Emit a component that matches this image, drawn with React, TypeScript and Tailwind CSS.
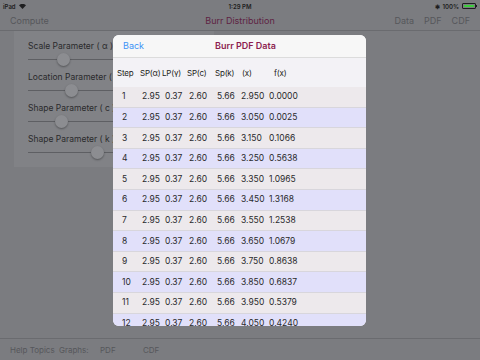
import React from "react";

const rows = [
  ["1", "2.950", "0.0000"],
  ["2", "3.050", "0.0025"],
  ["3", "3.150", "0.1066"],
  ["4", "3.250", "0.5638"],
  ["5", "3.350", "1.0965"],
  ["6", "3.450", "1.3168"],
  ["7", "3.550", "1.2538"],
  ["8", "3.650", "1.0679"],
  ["9", "3.750", "0.8638"],
  ["10", "3.850", "0.6837"],
  ["11", "3.950", "0.5379"],
  ["12", "4.050", "0.4240"],
];

const sliders = [
  { label: "Scale Parameter ( α )", thumb: 62 },
  { label: "Location Parameter ( γ )", thumb: 70 },
  { label: "Shape Parameter ( c )", thumb: 60 },
  { label: "Shape Parameter ( k )", thumb: 96 },
];

function Slider({ label, thumb }: { label: string; thumb: number }) {
  return (
    <div className="flex flex-col h-[31px]">
      <span className="w-[85px] overflow-hidden whitespace-nowrap text-[8.5px] text-[#2a2a2c] pt-[4px] leading-[12px]">
        {label}
      </span>
      <div className="relative h-[15px]">
        <div className="absolute left-0 right-0 top-[7px] h-px bg-[#5e5f63]" />
        <div
          className="absolute top-[1px] w-[13px] h-[13px] rounded-full bg-[#8c8d91] shadow-[0_1px_2px_rgba(0,0,0,0.35)]"
          style={{ left: thumb - 27 - 6 }}
        />
      </div>
    </div>
  );
}

export default function App() {
  return (
    <div
      className="relative w-[480px] h-[360px] overflow-hidden bg-[#7b7c80] flex flex-col"
      style={{ fontFamily: "Inter, 'Liberation Sans', sans-serif" }}
    >
      {/* status bar */}
      <div className="h-[12px] flex items-center justify-between px-[3px] text-[6px] font-semibold text-[#1e1e20]">
        <div className="flex items-center gap-[3px]">
          <span>iPad</span>
          <svg width="7" height="5" viewBox="0 0 10 7">
            <path d="M5 7 L0 1.8 A7.5 7.5 0 0 1 10 1.8 Z" fill="#1e1e20" />
          </svg>
        </div>
        <span className="absolute left-1/2 -translate-x-1/2">1:29 PM</span>
        <div className="flex items-center gap-[3px]">
          <span className="text-[6px]">✱</span>
          <span>100%</span>
          <div className="flex items-center">
            <div className="w-[14px] h-[6px] rounded-[1px] border border-[#1e1e20] p-px">
              <div className="w-full h-full bg-[#3dcc3d]" />
            </div>
            <div className="w-px h-[2px] bg-[#1e1e20]" />
          </div>
        </div>
      </div>

      {/* nav bar */}
      <div className="relative h-[19px] border-b border-[#6a6b6f] flex items-center px-[10px] text-[9px]">
        <span className="text-[#56575b]">Compute</span>
        <span className="absolute left-1/2 -translate-x-1/2 text-[#5e2343]">Burr Distribution</span>
        <div className="ml-auto flex gap-[10px] text-[#56575b]">
          <span>Data</span>
          <span>PDF</span>
          <span>CDF</span>
        </div>
      </div>

      {/* content */}
      <div className="flex-1">
        <div className="ml-[14px] w-[200px] h-[136px] bg-[#818286] pl-[14px] pr-[10px] pt-[5px]">
          {sliders.map((s) => (
            <Slider key={s.label} label={s.label} thumb={s.thumb} />
          ))}
        </div>
      </div>

      {/* bottom toolbar */}
      <div className="h-[22px] border-t border-[#6a6b6f] flex items-center px-[10px] text-[8px] text-[#56575b]">
        <span className="w-[49px]">Help Topics</span>
        <span className="w-[41px]">Graphs:</span>
        <span className="w-[43px]">PDF</span>
        <span>CDF</span>
      </div>

      {/* modal */}
      <div className="absolute left-[113px] top-[35px] w-[253px] h-[291px] rounded-[6px] overflow-hidden bg-white flex flex-col">
        <div className="relative h-[23px] shrink-0 bg-[#f7f7f7] border-b border-[#dcdcdc] flex items-center px-[10px]">
          <span className="text-[9px] text-[#3d94f6]">Back</span>
          <span className="absolute left-[calc(50%+6px)] -translate-x-1/2 text-[9px] font-semibold text-[#8c1d50]">
            Burr PDF Data
          </span>
        </div>
        <div className="h-[29px] shrink-0 bg-[#f3f2f6] flex items-center text-[8px] tracking-[-0.2px] text-[#1e1e20]">
          <span className="w-[27px] pl-[4px] shrink-0">Step</span>
          <span className="w-[22px] shrink-0">SP(α)</span>
          <span className="w-[25px] shrink-0">LP(γ)</span>
          <span className="w-[28px] shrink-0">SP(c)</span>
          <span className="w-[27px] shrink-0">Sp(k)</span>
          <span className="w-[32px] shrink-0">(x)</span>
          <span className="shrink-0">f(x)</span>
        </div>
        {rows.map((r, i) => (
          <div
            key={r[0]}
            className={`h-[20.6px] shrink-0 flex items-center text-[8.5px] text-[#2a2a2c] border-b border-[#d8d6dc] ${
              i % 2 === 0 ? "bg-[#ede9ec]" : "bg-[#e1e0fa]"
            }`}
          >
            <span className="w-[29px] pl-[9px] shrink-0">{r[0]}</span>
            <span className="w-[23px] shrink-0">2.95</span>
            <span className="w-[24px] shrink-0">0.37</span>
            <span className="w-[28px] shrink-0">2.60</span>
            <span className="w-[24px] shrink-0">5.66</span>
            <span className="w-[28px] shrink-0">{r[1]}</span>
            <span className="shrink-0">{r[2]}</span>
          </div>
        ))}
      </div>
    </div>
  );
}
